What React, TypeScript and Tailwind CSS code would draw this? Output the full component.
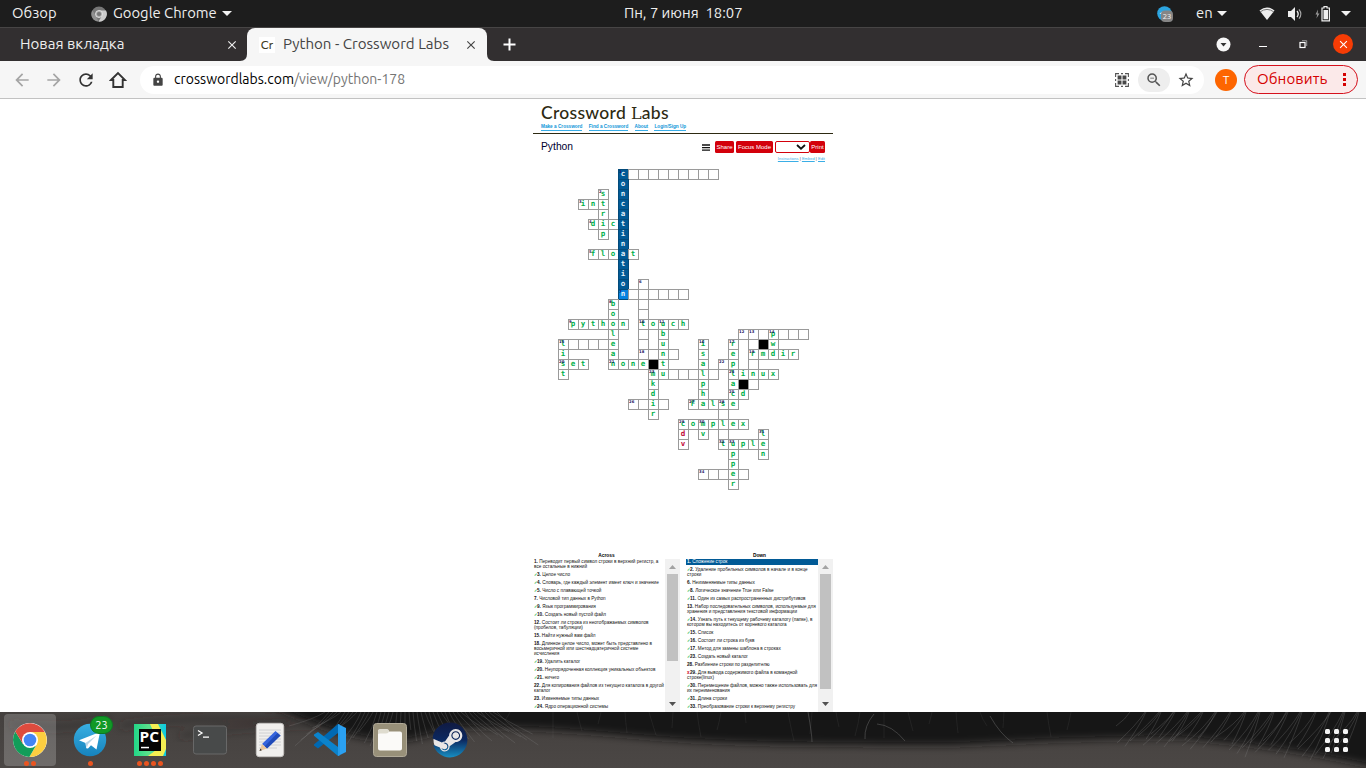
import type { ReactNode } from "react";
import { MdArrowBack, MdArrowForward, MdRefresh, MdLock, MdStarBorder, MdZoomOut, MdClose } from "react-icons/md";
import { FaSteam } from "react-icons/fa";

/* ---------- crossword data: runs of letters; "." is an empty cell, "#" a black one ---------- */
type Run = [row: number, col: number, text: string];

const RUNS: Run[] = [
  [0, 6, "c........."], [1, 6, "o"], [2, 4, "s"], [2, 6, "n"],
  [3, 2, "int"], [3, 6, "c"], [4, 4, "r"], [4, 6, "a"],
  [5, 3, "dict"], [6, 4, "p"], [6, 6, "i"], [7, 6, "n"],
  [8, 3, "float"], [9, 6, "t"], [10, 6, "i"], [11, 6, "o"], [11, 8, "."],
  [12, 6, "n......"], [13, 5, "b"], [13, 8, "."], [14, 5, "o"], [14, 8, "."],
  [15, 1, "python"], [15, 8, "touch"],
  [16, 5, "l"], [16, 8, "."], [16, 10, "b"], [16, 18, "...p..."],
  [17, 0, "l....e"], [17, 8, "."], [17, 10, "u"], [17, 14, "i"], [17, 17, "r"], [17, 19, ".#w"],
  [18, 0, "i"], [18, 5, "a"], [18, 8, "..n."], [18, 14, "s"], [18, 17, "e"], [18, 19, "rmdir"],
  [19, 0, "set"], [19, 5, "none#t"], [19, 14, "a"], [19, 16, ".p"], [19, 19, "."],
  [20, 0, "t"], [20, 9, "mu...l."], [20, 17, "linux"],
  [21, 9, "k"], [21, 14, "p"], [21, 17, "a#."],
  [22, 9, "d"], [22, 14, "h"], [22, 17, "cd"],
  [23, 7, "..i."], [23, 13, "False"], [24, 9, "r"], [24, 16, "."],
  [25, 12, "complex"], [26, 12, "d"], [26, 14, "v"], [26, 16, "."], [26, 20, "l"],
  [27, 12, "v"], [27, 16, "tuple"], [28, 17, "p"], [28, 20, "n"], [29, 17, "p"],
  [30, 14, "...e."], [31, 17, "r"],
];

const NUMBERS: Record<string, number> = {
  "0,6": 1, "2,4": 2, "3,2": 3, "5,3": 4, "8,3": 5, "11,8": 6, "12,6": 7, "13,5": 8, "15,1": 9,
  "15,8": 10, "15,10": 11, "16,18": 12, "16,19": 13, "16,21": 14, "17,0": 15, "17,14": 16, "17,17": 17,
  "18,8": 18, "18,19": 19, "19,0": 20, "19,5": 21, "19,16": 22, "20,9": 23, "20,17": 24, "22,17": 25,
  "23,7": 26, "23,13": 27, "23,16": 28, "25,12": 29, "25,14": 30, "26,20": 31, "27,16": 32, "27,17": 33, "30,14": 34,
};

const WRONG = new Set(["26,12", "27,12"]);

const GRID: string[][] = Array.from({ length: 32 }, () => Array(25).fill(" "));
for (const [r, c, text] of RUNS) [...text].forEach((ch, i) => (GRID[r][c + i] = ch));

function Cell({ r, c }: { r: number; c: number }) {
  const ch = GRID[r][c];
  if (ch === " ") return <div />;
  if (ch === "#") return <div className="bg-black" />;
  const active = c === 6 && r <= 12;
  const bg = active ? (r === 12 ? "bg-[#0782e0]" : "bg-[#015a96]") : "bg-white";
  const border = active ? "border-[#034a7a]" : "border-[#9a9a9a]";
  const color = active ? "text-[#e4f0f8]" : WRONG.has(`${r},${c}`) ? "text-[#c00838]" : "text-[#00b04a]";
  const n = NUMBERS[`${r},${c}`];
  return (
    <div className={`relative -mr-px -mb-px flex items-center justify-center border pr-px pb-px font-['DejaVu_Sans_Mono',monospace] text-[7.5px] leading-[8px] font-bold ${bg} ${border} ${color}`}>
      {n && <span className="absolute top-0 left-0 font-['DejaVu_Sans',sans-serif] text-[3.8px] leading-[4px] text-[#1b1464]">{n}</span>}
      {ch !== "." && ch}
    </div>
  );
}

/* ---------- clues ---------- */
type Clue = { n: number; m?: "ok" | "bad"; t: string[] };
const ACROSS: Clue[] = [
  { n: 1, t: ["Переводит первый символ строки в верхний регистр, а", "все остальные в нижний"] },
  { n: 3, m: "ok", t: ["Целое число"] },
  { n: 4, m: "ok", t: ["Словарь, где каждый элемент имеет ключ и значение"] },
  { n: 5, m: "ok", t: ["Число с плавающей точкой"] },
  { n: 7, t: ["Числовой тип данных в Python"] },
  { n: 9, m: "ok", t: ["Язык программирования"] },
  { n: 10, m: "ok", t: ["Создать новый пустой файл"] },
  { n: 12, t: ["Состоит ли строка из неотображаемых символов", "(пробелов, табуляции)"] },
  { n: 15, t: ["Найти нужный вам файл"] },
  { n: 18, t: ["Длинное целое число, может быть представлено в", "восьмеричной или шестнадцатеричной системе", "исчисления"] },
  { n: 19, m: "ok", t: ["Удалить каталог"] },
  { n: 20, m: "ok", t: ["Неупорядоченная коллекция уникальных объектов"] },
  { n: 21, m: "ok", t: ["ничего"] },
  { n: 22, t: ["Для копирования файлов из текущего каталога в другой", "каталог"] },
  { n: 23, t: ["Изменяемые типы данных"] },
  { n: 24, m: "ok", t: ["Ядро операционной системы"] },
];
const DOWN: Clue[] = [
  { n: 1, t: ["Сложение строк"] },
  { n: 2, m: "ok", t: ["Удаление пробельных символов в начале и в конце", "строки"] },
  { n: 6, t: ["Неизменяемые типы данных"] },
  { n: 8, m: "ok", t: ["Логическое значение True или False"] },
  { n: 11, m: "ok", t: ["Один из самых распространенных дистрибутивов"] },
  { n: 13, t: ["Набор последовательных символов, используемые для", "хранения и представления текстовой информации"] },
  { n: 14, m: "ok", t: ["Узнать путь к текущему рабочему каталогу (папке), в", "котором вы находитесь от корневого каталога"] },
  { n: 15, m: "ok", t: ["Список"] },
  { n: 16, m: "ok", t: ["Состоит ли строка из букв"] },
  { n: 17, m: "ok", t: ["Метод для замены шаблона в строках"] },
  { n: 23, m: "ok", t: ["Создать новый каталог"] },
  { n: 28, t: ["Разбиение строки по разделителю"] },
  { n: 29, m: "bad", t: ["Для вывода содержимого файла в командной", "строке(linux)"] },
  { n: 30, m: "ok", t: ["Перемещение файлов, можно также использовать для", "их переименования"] },
  { n: 31, m: "ok", t: ["Длина строки"] },
  { n: 33, m: "ok", t: ["Преобразование строки к верхнему регистру"] },
];

function Clues({ title, items, thumb, selected }: { title: string; items: Clue[]; thumb: string; selected?: number }) {
  return (
    <section className="flex w-[147px] flex-col">
      <h3 className="h-[8px] pt-px text-center text-[4.8px] leading-[7px] font-bold text-black">{title}</h3>
      <div className="flex h-[153px] overflow-hidden">
        <ul className="flex flex-1 flex-col gap-[3px] overflow-hidden text-[4.68px] leading-[5px] whitespace-nowrap text-[#111]">
          {items.map((q) => (
            <li key={q.n} className={q.n === selected ? "-mb-px h-[6px] bg-[#015a96] pl-px text-white" : "pl-px"}>
              {q.t.map((line, i) => (
                <div key={line} className="h-[5px]">
                  {i === 0 && q.m === "ok" && <span className="inline-block w-[3px] text-[3.5px] font-bold text-[#00ab30]">✓</span>}
                  {i === 0 && q.m === "bad" && <span className="inline-block w-[3px] font-bold text-[#d0021b]">x</span>}
                  {i === 0 && <b>{q.n}. </b>}
                  {line}
                </div>
              ))}
            </li>
          ))}
        </ul>
        <div className="flex w-[15px] flex-col items-center bg-[#f1f1f1]">
          <svg className="h-[15px] w-[15px] shrink-0" viewBox="0 0 15 15"><path d="M4 10 L7.5 6 L11 10Z" fill="#a3a3a3" /></svg>
          <div className={`w-[11px] bg-[#c1c1c1] ${thumb}`} />
          <div className="flex-1" />
          <svg className="h-[15px] w-[15px] shrink-0" viewBox="0 0 15 15"><path d="M4 5 L7.5 9 L11 5Z" fill="#505050" /></svg>
        </div>
      </div>
    </section>
  );
}

/* ---------- desktop top bar ---------- */
function Caret() {
  return <svg className="h-[5px] w-[10px] shrink-0" viewBox="0 0 10 5"><path d="M0 0H10L5 5Z" fill="#f2f2f2" /></svg>;
}

function TopBar() {
  return (
    <header className="flex h-[28px] shrink-0 items-center border-b border-[#474545] bg-[#1d1d1d] text-[14.8px] text-[#eee]">
      <span className="ml-[12px] w-[79px]">Обзор</span>
      <svg className="mr-[6px] h-4 w-4" viewBox="0 0 16 16">
        <circle cx="8" cy="8" r="7.6" fill="#777" />
        <path d="M8 4.5H15A7.6 7.6 0 0 1 7.5 15.6L11 9.8Z" fill="#ccc" />
        <path d="M1.3 4.3 5 10 7.5 15.6A7.6 7.6 0 0 1 1.3 4.3Z" fill="#909090" />
        <circle cx="8" cy="8" r="3.5" fill="#aaa" stroke="#eee" strokeWidth=".8" />
        <circle cx="8" cy="8" r="2" fill="#777" />
      </svg>
      <span className="w-[109px] whitespace-nowrap">Google Chrome</span>
      <Caret />
      <span className="ml-[392px] w-[120px] whitespace-pre">Пн, 7 июня  18:07</span>
      <svg className="ml-[413px] h-4 w-4" viewBox="0 0 16 16">
        <circle cx="7.5" cy="7.5" r="7.3" fill="#2ca5e0" />
        <path d="M2.5 7.6 6 5.5 5 8Z" fill="white" />
        <rect x="4" y="4.5" width="12" height="11.5" rx="4" fill="#858585" />
        <text x="10" y="12.8" fontSize="7.4" textAnchor="middle" fill="#eee" fontFamily="Noto Sans, sans-serif">23</text>
      </svg>
      <span className="ml-[23px] w-[21px]">en</span>
      <Caret />
      <svg className="ml-[32px] h-4 w-4" viewBox="0 0 16 16"><path d="M0.5 4.5Q8-1.5 15.5 4.5L8 14Z" fill="#eee" /><path d="M1 6Q8 .8 15 6" stroke="#777" fill="none" /></svg>
      <svg className="ml-[12px] h-4 w-4" viewBox="0 0 16 16"><path d="M1 5H4L8 1V15L4 11H1Z" fill="#eee" /><path d="M10 5Q12.4 8 10 11" fill="none" stroke="#eee" strokeWidth="1.3" /><path d="M12 3.3Q15.7 8 12 12.7" fill="none" stroke="#aaa" strokeWidth="1.1" /></svg>
      <svg className="ml-[12px] h-4 w-4" viewBox="0 0 16 16"><path d="M3 3.5 .5 8.5H2.2L1.4 12.5 4.5 7.5H2.7Z" fill="#999" /><path d="M7 2H9V.6H12V2H14.4V14.8H7Z" fill="none" stroke="#eee" strokeWidth="1.2" /><path d="M8.5 4H13V13.3H8.5Z" fill="#eee" /></svg>
      <span className="ml-[10px] flex"><Caret /></span>
    </header>
  );
}

/* ---------- browser ---------- */
function Tabs() {
  return (
    <div className="flex h-[33px] shrink-0 items-stretch bg-[#322f30] text-[15.1px]">
      <div className="relative flex w-[247px] items-center text-[#eee]">
        <span className="ml-[20px] w-[205px]">Новая вкладка</span>
        <MdClose className="h-[14px] w-[14px]" />
        <svg className="absolute right-0 bottom-0 h-[7px] w-[7px]" viewBox="0 0 7 7"><path d="M7 0V7H0Q7 7 7 0Z" fill="#f6f6f6" /></svg>
      </div>
      <div className="flex w-[240px] items-center rounded-t-[8px] bg-[#f6f6f6] text-[#444]">
        <span className="ml-[12px] flex h-4 w-4 items-center justify-center bg-white font-['Lato',sans-serif] text-[12px] text-[#3d3a22]">Cr</span>
        <span className="ml-[8px] w-[181px] whitespace-nowrap">Python - Crossword Labs</span>
        <MdClose className="h-[14px] w-[14px]" />
      </div>
      <svg className="h-[7px] w-[7px] self-end" viewBox="0 0 7 7"><path d="M0 0V7H7Q0 7 0 0Z" fill="#f6f6f6" /></svg>
      <svg className="mt-[10px] ml-[9px] h-[13px] w-[13px]" viewBox="0 0 13 13"><path d="M6.5 .5V12.5M.5 6.5H12.5" stroke="white" strokeWidth="2" /></svg>
      <svg className="mt-[9px] ml-auto h-[15px] w-[15px]" viewBox="0 0 15 15"><circle cx="7.5" cy="7.5" r="7" fill="#f7f7f7" /><path d="M4.5 6H10.5L7.5 9.6Z" fill="#333" /></svg>
      <div className="mt-[18px] ml-[28px] h-px w-[8px] bg-white" />
      <svg className="mt-[12px] ml-[32px] h-[9px] w-[9px]" viewBox="0 0 9 9"><rect x="1" y="2.5" width="5" height="5" fill="none" stroke="white" strokeWidth="1.2" /><path d="M3 .7H7.7V6" fill="none" stroke="#999" /></svg>
      <div className="mt-[6px] mr-[13px] ml-[25px] flex h-[20px] w-[20px] items-center justify-center rounded-full bg-[#f63c05]"><MdClose className="h-[13px] w-[13px] text-white" /></div>
    </div>
  );
}

function Toolbar() {
  return (
    <div className="flex h-[38px] shrink-0 items-center border-b border-[#c2c2c2] bg-[#f6f6f6] text-[#333]">
      <MdArrowBack className="ml-[12px] h-5 w-5 text-[#a5a5a5]" />
      <MdArrowForward className="ml-[12px] h-5 w-5 text-[#a5a5a5]" />
      <MdRefresh className="ml-[12px] h-[20px] w-[20px]" />
      <svg className="ml-[13px] h-[18px] w-[18px]" viewBox="0 0 18 18"><path d="M2 9 9 2 16 9H13.7V16H4.3V9Z" fill="none" stroke="#333" strokeWidth="1.9" /></svg>
      <div className="ml-[13px] flex h-[28px] w-[1064px] items-center rounded-full bg-white">
        <MdLock className="ml-[11px] h-[14px] w-[14px] text-[#444]" />
        <span className="ml-[9px] text-[14px] whitespace-nowrap text-[#757575]"><span className="text-black">crosswordlabs.com</span>/view/python-178</span>
        <svg className="ml-auto h-[14px] w-[14px]" viewBox="0 0 14 14">
          <path d="M.6 4V.6H4M6 .6H8M10 .6H13.4V4M13.4 6V8M13.4 10V13.4H10M8 13.4H6M4 13.4H.6V10M.6 8V6" fill="none" stroke="#555" strokeWidth="1.1" />
          <path d="M2.6 2.6H6.5V6.5H2.6ZM7.5 2.6H11.4V6.5H7.5ZM2.6 7.5H6.5V11.4H2.6ZM7.5 7.5H11.4V11.4H7.5Z" fill="#484848" />
        </svg>
        <span className="ml-[9px] flex h-[24px] w-[32px] items-center justify-center rounded-full bg-[#eee]"><MdZoomOut className="h-[18px] w-[18px] text-[#555]" /></span>
        <MdStarBorder className="mr-[9px] ml-[7px] h-[18px] w-[18px] text-[#444]" />
      </div>
      <span className="ml-[11px] flex h-[22px] w-[22px] items-center justify-center rounded-full bg-[#fd6500] text-[12px] text-white">Т</span>
      <span className="ml-[7px] flex h-[29px] w-[114px] items-center rounded-full border border-[#d5101c] bg-[#fbe9e9] text-[15px] tracking-[0.1px] text-[#d50000]">
        <span className="ml-[12px] w-[86px]">Обновить</span>
        <svg className="h-[13px] w-[3px]" viewBox="0 0 3 13"><path d="M0 0H3V3H0ZM0 5H3V8H0ZM0 10H3V13H0Z" fill="#d50000" /></svg>
      </span>
    </div>
  );
}

function RedButton({ w, children }: { w: string; children: ReactNode }) {
  return <span className={`flex h-[12px] items-center justify-center rounded-[1.5px] bg-[#d3000b] text-[6px] text-white ${w}`}>{children}</span>;
}

function Page() {
  return (
    <main className="flex h-[613px] shrink-0 flex-col items-center overflow-hidden bg-white font-['Liberation_Sans',sans-serif]">
      <div className="flex w-[300px] flex-col">
        <div className="flex h-[35px] flex-col border-b border-[#2d2a12] pl-[8px]">
          <div className="mt-[4px] h-[20px] font-['Lato',sans-serif] text-[17.5px] leading-[19px] font-medium tracking-[0.3px] whitespace-nowrap text-[#2d2a12]">
            Crossword <span className="font-['DejaVu_Serif',serif] text-[16px] leading-none">L</span>abs
          </div>
          <nav className="mt-px flex gap-[6.3px] text-[4.7px] leading-[6px] font-bold whitespace-nowrap text-[#0e96d8]">
            {["Make a Crossword", "Find a Crossword", "About", "Login/Sign Up"].map((t) => (
              <a key={t} className="border-b border-[#3aaee6]">{t}</a>
            ))}
          </nav>
        </div>
        <div className="mt-[7px] flex h-[12px] items-center pl-[8px]">
          <h1 className="w-[161px] text-[10.3px] text-[#000030]">Python</h1>
          <svg className="mr-[5px] h-[8px] w-[8px]" viewBox="0 0 8 8"><path d="M0 2H8M0 4.6H8M0 7.2H8" stroke="#111" strokeWidth="1.3" /></svg>
          <RedButton w="w-[19px]">Share</RedButton>
          <span className="w-[2px]" />
          <RedButton w="w-[37px]">Focus Mode</RedButton>
          <span className="ml-[2px] flex h-[12px] w-[35px] items-center justify-end rounded-[2px] border border-[#d3000b] bg-white pr-[3px]">
            <svg className="h-[6px] w-[10px]" viewBox="0 0 10 6"><path d="M1 1 5 4.7 9 1" fill="none" stroke="#111" strokeWidth="1.8" /></svg>
          </span>
          <RedButton w="w-[15px]">Print</RedButton>
        </div>
        <div className="mt-[3px] h-[6px] pr-[8px] text-right text-[4.05px] leading-[5px] text-[#444]">
          <a className="text-[#3aaee6] underline">Instructions</a> | <a className="text-[#3aaee6] underline">Embed</a> | <a className="text-[#3aaee6] underline">Edit</a>
        </div>
        <div className="mt-[7px] ml-[25px] grid w-[250px] grid-cols-[repeat(25,10px)] grid-rows-[repeat(32,10px)]">
          {GRID.flatMap((row, r) => row.map((_, c) => <Cell key={`${r},${c}`} r={r} c={c} />))}
        </div>
        <div className="mt-[62px] flex gap-[6px]">
          <Clues title="Across" items={ACROSS} thumb="h-[87px]" />
          <Clues title="Down" items={DOWN} thumb="h-[115px]" selected={1} />
        </div>
      </div>
    </main>
  );
}

/* ---------- dock ---------- */
function Slot({ dots = 0, active, children }: { dots?: number; active?: boolean; children: ReactNode }) {
  return (
    <div className={`relative mx-[4px] mt-[2px] flex h-[52px] w-[52px] flex-col items-center rounded-[4px] pt-[8px] ${active ? "bg-white/20" : ""}`}>
      <div className="h-[36px] w-[36px]">{children}</div>
      <div className="mt-[3px] flex gap-[2px]">
        {Array.from({ length: dots }, (_, i) => <i key={i} className="h-[5px] w-[5px] rounded-full bg-[#e95420]" />)}
      </div>
    </div>
  );
}

function Fur() {
  const strand = (x: number, i: number, lean: number, len: number) =>
    `M${x} 0Q${x + lean * 0.3} ${len * 0.5} ${x + lean} ${len + ((i * 7) % 9)}`;
  const left = Array.from({ length: 44 }, (_, i) => strand(325 + i * 4, i, (i - 20) * 1.8, 14 + ((i * 13) % 17)));
  const mid = Array.from({ length: 22 }, (_, i) => strand(510 + i * 26 + ((i * 17) % 19), i, ((i * 5) % 13) - 5, 8 + ((i * 11) % 16)));
  const right = Array.from({ length: 46 }, (_, i) => strand(1130 + i * 5 + ((i * 11) % 17), i, -14 - ((i * 7) % 20), 14 + i * 0.4 + ((i * 13) % 15)));
  return (
    <svg className="absolute inset-0 h-full w-full" viewBox="0 0 1366 56" preserveAspectRatio="none">
      <defs>
        <linearGradient id="ground" x1="0" y1="0" x2="0" y2="1"><stop stopColor="#44403e" /><stop offset="1" stopColor="#4b4745" /></linearGradient>
        <filter id="soft" x="-5%" y="-30%" width="110%" height="160%"><feGaussianBlur stdDeviation="4" /></filter>
        <filter id="hair"><feGaussianBlur stdDeviation=".4" /></filter>
      </defs>
      <rect width="1366" height="56" fill="url(#ground)" />
      <path d="M260-10C300 4 320 20 380 28Q410 32 450 16C560 14 620 25 700 29S850 33 950 33C1020 30 1090 26 1180 26Q1280 34 1380 56V-10Z" fill="#191919" filter="url(#soft)" />
      <path d="M120 14Q190 4 290 8M180 24Q250 12 320 12M10 12Q60 20 110 8" stroke="#2d2a29" strokeOpacity=".6" strokeWidth="4" fill="none" filter="url(#soft)" />
      <g filter="url(#hair)">
        <path d={left.join("")} stroke="#888" strokeOpacity=".28" strokeWidth=".9" fill="none" />
        <path d={mid.join("")} stroke="#777" strokeOpacity=".2" strokeWidth=".7" fill="none" />
        <path d={right.join("")} stroke="#888" strokeOpacity=".35" strokeWidth=".8" fill="none" />
        <path d="M877 12Q892 13 905 29M874 2Q864 14 865 27M808 0Q812 22 812 30M990 4Q1000 22 1013 31" stroke="#888" strokeOpacity=".45" strokeWidth=".8" fill="none" />
      </g>
    </svg>
  );
}

function Dock() {
  return (
    <footer className="relative flex h-[56px] shrink-0 overflow-hidden bg-[#454140]">
      <Fur />
      <Slot dots={2} active>
        <svg viewBox="0 0 36 36">
          <circle cx="18" cy="18" r="17" fill="#fff" />
          <path d="M18 18 3.3 9.5A17 17 0 0 1 32.7 10H18Z" fill="#dd4b3e" />
          <path d="M18 10H32.7A17 17 0 0 1 17.3 35L25 22Z" fill="#fcce40" />
          <path d="M3.3 9.5A17 17 0 0 0 17.3 35L24 23.5 11 22Z" fill="#129d59" />
          <path d="M3.3 9.5 11 22 18 10Z" fill="#dd4b3e" />
          <circle cx="18" cy="18" r="8" fill="#fff" /><circle cx="18" cy="18" r="6.3" fill="#4385f4" />
        </svg>
      </Slot>
      <Slot dots={1}>
        <svg viewBox="0 0 36 36">
          <defs><linearGradient id="tg" x1="0" y1="0" x2="0" y2="1"><stop stopColor="#38afe2" /><stop offset="1" stopColor="#1683bd" /></linearGradient></defs>
          <circle cx="18" cy="18" r="16.2" fill="url(#tg)" />
          <path d="M7 18.2 28 10 24.5 27.5 19 23.3 16 26.5 14.2 26.3 13.5 21Z" fill="white" />
          <path d="M13.5 21 24.5 13.5 16 22 14.8 26Z" fill="#b7d4e6" />
        </svg>
        <span className="absolute top-[2px] right-[3px] flex h-[18px] w-[23px] items-center justify-center rounded-full border border-[#0b7a23] bg-[#129926] text-[11px] text-white">23</span>
      </Slot>
      <Slot dots={4}>
        <svg viewBox="0 0 36 36">
          <defs><linearGradient id="pc" x1="0" y1="0" x2="1" y2="0"><stop stopColor="#21d789" /><stop offset=".45" stopColor="#5be08a" /><stop offset="1" stopColor="#0ccbe4" /></linearGradient></defs>
          <rect x="2" y="2" width="32" height="32" fill="url(#pc)" />
          <path d="M18 2H26L34 18V27L31 34H16L28 25Z" fill="#f5ee52" />
          <rect x="7" y="7" width="22" height="22" fill="#050505" />
          <text x="7.6" y="19.5" fontSize="14" fontWeight="700" fill="white" textLength="19.5" lengthAdjust="spacingAndGlyphs" fontFamily="Open Sans, sans-serif">PC</text>
          <rect x="9" y="24.8" width="8" height="1.5" fill="white" />
        </svg>
      </Slot>
      <Slot>
        <svg viewBox="0 0 36 36">
          <rect x="1.5" y="4" width="33" height="28" rx="2.5" fill="#484a4a" stroke="#686868" />
          <path d="M6 8.5 10 11 6 13.5M11 15.2H17" fill="none" stroke="white" strokeWidth="1.3" />
        </svg>
      </Slot>
      <Slot>
        <svg viewBox="0 0 36 36">
          <rect x="4.3" y="1.3" width="27.4" height="33.4" rx="3" fill="#f0efed" stroke="#c5c3c1" />
          <path d="M7 8H29M7 11H29M7 14H29M7 17H29M7 20H29M7 23H29M7 26H25" stroke="#c7c9cc" strokeWidth=".8" />
          <path d="M23.5 9 28.5 13.5 15 26.5 10 22Z" fill="#3564dd" /><path d="M25.5 11 28.5 13.5 15 26.5 12.5 24.5Z" fill="#204bb8" />
          <path d="M10 22 15 26.5 7.5 29Z" fill="#eac69b" /><path d="M8.4 26.4 9.9 28.2 7.5 29Z" fill="#333" />
        </svg>
      </Slot>
      <Slot>
        <svg viewBox="0 0 36 36">
          <path d="M26 2 34 6V30L26 34Z" fill="#2ba1f2" />
          <path d="M26 2V11L6 26.5 2 23.5V22.5Z" fill="#0069b3" />
          <path d="M6 10 26 25V34L2 13.8V12.5Z" fill="#0b83cc" />
          <path d="M26 2 28 3V33L26 34Z" fill="#259bea" />
        </svg>
      </Slot>
      <Slot>
        <svg viewBox="0 0 36 36">
          <rect x="1.5" y="1.5" width="33" height="33" rx="3" fill="#989079" stroke="#b1aa98" />
          <path d="M6 9Q6 7.3 8 7.3H15Q16.6 7.3 17 9.5H28Q30 9.5 30 11.5V26.5Q30 28.5 28 28.5H8Q6 28.5 6 26.5Z" fill="#fbfaf8" />
          <path d="M6 12V9Q6 7.3 8 7.3H15Q16.6 7.3 17 9.5 16.5 11.5 14 11.5H8Q6.3 11.5 6 12Z" fill="#dfdccf" />
        </svg>
      </Slot>
      <Slot>
        <svg viewBox="0 0 36 36">
          <defs><linearGradient id="st" x1="0" y1="0" x2="0" y2="1"><stop stopColor="#101a42" /><stop offset=".5" stopColor="#0b2860" /><stop offset="1" stopColor="#178fc3" /></linearGradient></defs>
          <circle cx="18" cy="18" r="16.5" fill="#e8e6e6" />
          <FaSteam x="0" y="0" size={36} style={{ fill: "url(#st)" }} />
        </svg>
      </Slot>
      <div className="relative mt-[17px] mr-[18px] ml-auto grid h-[23px] w-[23px] grid-cols-3 grid-rows-3 gap-[4px]">
        {Array.from({ length: 9 }, (_, i) => <i key={i} className="rounded-[1.5px] bg-[#f5f5f5]" />)}
      </div>
    </footer>
  );
}

export default function App() {
  return (
    <div className="flex h-[768px] w-[1366px] flex-col overflow-hidden bg-white font-['Ubuntu','Noto_Sans',sans-serif]">
      <TopBar />
      <Tabs />
      <Toolbar />
      <Page />
      <Dock />
    </div>
  );
}
